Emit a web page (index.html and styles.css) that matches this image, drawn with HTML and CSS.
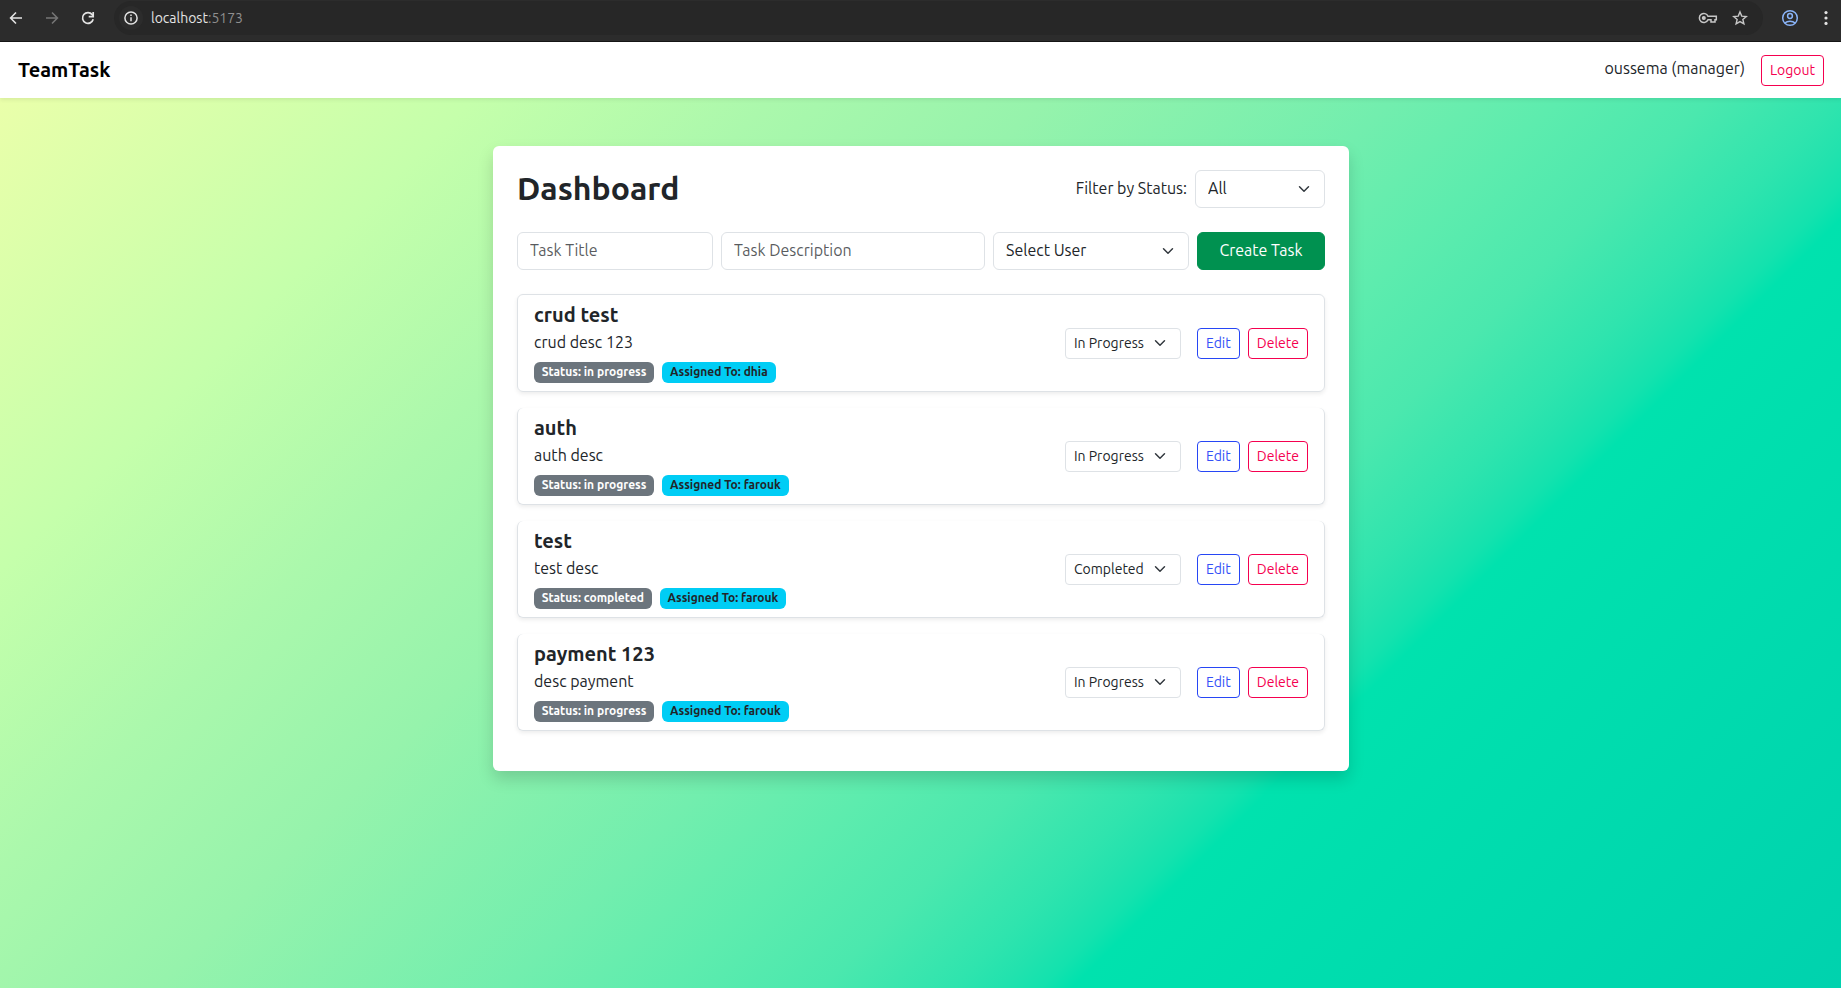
FILE: index.html
```html
<!DOCTYPE html>
<html lang="en">
<head>
<meta charset="utf-8">
<title>TeamTask</title>
<link rel="stylesheet" href="styles.css">
</head>
<body>
<header class="browser">
  <svg class="ic-back" width="16" height="16" viewBox="0 0 16 16" fill="none" stroke="#e3e3e3" stroke-width="1.6"><path d="M14 8H3M8 2.5 2.6 8 8 13.5"/></svg>
  <svg class="ic-forward" width="16" height="16" viewBox="0 0 16 16" fill="none" stroke="#757575" stroke-width="1.6"><path d="M2 8h11M8 2.5 13.4 8 8 13.5"/></svg>
  <svg class="ic-reload" width="16" height="16" viewBox="0 0 16 16" fill="none" stroke="#e3e3e3" stroke-width="1.7"><path d="M13.2 9.3A5.4 5.4 0 1 1 12.2 4.6L13.3 6"/><path d="M13.2 2v4.7H8.7"/></svg>
  <div class="omnibox">
    <span class="site-info"><svg width="14" height="14" viewBox="0 0 14 14" fill="none" stroke="#e3e3e3" stroke-width="1.5"><circle cx="7" cy="7" r="6.1"/><path d="M7 6.2v4M7 3.6v1.5"/></svg></span>
    <span class="url">localhost<span class="port">:5173</span></span>
    <svg class="ic-key" width="20" height="12" viewBox="0 0 20 12" fill="none" stroke="#c7c7c7" stroke-width="1.5"><path d="M10 4.2A4.5 4.5 0 1 0 10 7.8H13V10h4V7.8h1.3V4.2z"/><circle cx="5.8" cy="6" r="1.3" fill="#c7c7c7"/></svg>
    <svg class="ic-star" width="16" height="16" viewBox="0 0 16 16" fill="none" stroke="#c7c7c7" stroke-width="1.4"><path d="m8 1.9 1.75 4.2 4.55.4-3.45 3 1.05 4.4L8 11.55 4.1 13.9l1.05-4.4-3.45-3 4.55-.4z"/></svg>
  </div>
  <svg class="ic-profile" width="18" height="18" viewBox="0 0 18 18" fill="none" stroke="#8ab4f8" stroke-width="1.5"><circle cx="9" cy="9" r="7.3"/><circle cx="9" cy="7" r="2.4"/><path d="M3.8 14C6.5 11.6 11.5 11.6 14.2 14"/></svg>
  <svg class="ic-menu" width="4" height="16" viewBox="0 0 4 16" fill="#e3e3e3"><circle cx="2" cy="2.6" r="1.6"/><circle cx="2" cy="8" r="1.6"/><circle cx="2" cy="13.4" r="1.6"/></svg>
</header>
<div class="page">
  <nav class="navbar">
    <span class="brand">TeamTask</span>
    <div class="account"><span class="user">oussema (manager)</span><button class="btn btn-sm btn-danger">Logout</button></div>
  </nav>
  <main class="card">
    <div class="card-head">
      <h2>Dashboard</h2>
      <div class="filter"><label for="filter">Filter by Status:</label>
        <select id="filter" class="select"><option>All</option></select></div>
    </div>
    <form class="create">
      <input class="input" placeholder="Task Title">
      <input class="input" placeholder="Task Description">
      <select class="select"><option>Select User</option></select>
      <button type="button" class="btn btn-success">Create Task</button>
    </form>
    <ul class="tasks">
      <li class="task">
        <div><h5>crud test</h5><p>crud desc 123</p><div class="badges"><span class="badge">Status: in progress</span><span class="badge badge-info">Assigned To: dhia</span></div></div>
        <div class="actions"><select class="select select-sm"><option>In Progress</option></select><button class="btn btn-sm btn-primary">Edit</button><button class="btn btn-sm btn-danger">Delete</button></div>
      </li>
      <li class="task">
        <div><h5>auth</h5><p>auth desc</p><div class="badges"><span class="badge">Status: in progress</span><span class="badge badge-info">Assigned To: farouk</span></div></div>
        <div class="actions"><select class="select select-sm"><option>In Progress</option></select><button class="btn btn-sm btn-primary">Edit</button><button class="btn btn-sm btn-danger">Delete</button></div>
      </li>
      <li class="task">
        <div><h5>test</h5><p>test desc</p><div class="badges"><span class="badge">Status: completed</span><span class="badge badge-info">Assigned To: farouk</span></div></div>
        <div class="actions"><select class="select select-sm"><option>Completed</option></select><button class="btn btn-sm btn-primary">Edit</button><button class="btn btn-sm btn-danger">Delete</button></div>
      </li>
      <li class="task">
        <div><h5>payment 123</h5><p>desc payment</p><div class="badges"><span class="badge">Status: in progress</span><span class="badge badge-info">Assigned To: farouk</span></div></div>
        <div class="actions"><select class="select select-sm"><option>In Progress</option></select><button class="btn btn-sm btn-primary">Edit</button><button class="btn btn-sm btn-danger">Delete</button></div>
      </li>
    </ul>
  </main>
</div>
</body>
</html>
```
FILE: styles.css
```css
*, *::before, *::after { box-sizing: border-box; }
body {
  margin: 0;
  height: 988px;
  overflow: hidden;
  display: flex;
  flex-direction: column;
  font: 400 16px/1.5 Ubuntu, "Noto Sans", sans-serif;
  color: #212529;
}
h2, h5, p, ul { margin: 0; padding: 0; }
button, input, select { font: inherit; color: inherit; }

/* Browser toolbar */
.browser {
  flex: none;
  height: 42px;
  display: flex;
  align-items: center;
  padding: 0 13px 6px 8px;
  background: #2c2c2c;
  border-bottom: 1px solid #161616;
}
.browser svg { flex: none; }
.ic-forward { margin-left: 20px; }
.ic-reload { margin-left: 20px; }
.omnibox {
  flex: 1;
  height: 34px;
  margin: 0 18px 0 18px;
  padding: 0 15px 0 5px;
  display: flex;
  align-items: center;
  border-radius: 17px;
  background: #272727;
}
.site-info {
  width: 24px;
  height: 24px;
  display: flex;
  align-items: center;
  justify-content: center;
  border-radius: 50%;
  background: #2c2c2c;
}
.url { flex: 1; margin-left: 8px; padding-top: 2px; font-size: 14px; color: #e3e3e3; }
.port { color: #8f8f8f; }
.ic-star { margin-left: 14px; }
.ic-menu { margin-left: 25px; }

/* Application */
.page {
  flex: 1;
  background: linear-gradient(135deg, #eeffaa 0%, #c5ffab 19%, #abf8ac 29.7%, #96f3ac 39.5%, #72eeae 52%, #5decae 58%, #4be8ae 63.4%, #2fe4ae 68.1%, #22e2ae 69.8%, #13e2ae 71.3%, #00e2ae 72.4%, #00d2ae 100%);
}
.navbar {
  position: relative;
  height: 56px;
  display: flex;
  align-items: center;
  justify-content: space-between;
  padding: 0 17px 0 18px;
  background: #fff;
  box-shadow: 0 2px 4px rgba(0, 0, 0, .075);
}
.brand { font-size: 20px; font-weight: 600; color: #000; }
.account { display: flex; align-items: center; }
.user { margin-right: 16px; padding-bottom: 5px; }
.card {
  width: 856px;
  height: 625px;
  margin: 48px 0 0 493px;
  padding: 24px;
  background: #fff;
  border-radius: 6px;
  box-shadow: 0 8px 16px rgba(0, 0, 0, .15);
}
.card-head { display: flex; align-items: center; justify-content: space-between; height: 38px; }
h2 { font-size: 32px; line-height: 36px; padding-bottom: 2px; font-weight: 600; }
.filter { display: flex; align-items: center; gap: 8px; }
.filter label { padding-bottom: 2px; }
.filter .select { width: 130px; }
.create { display: grid; grid-template-columns: 196px 264px 196px 128px; gap: 8px; margin: 24px 0; }
.input, .select {
  width: 100%;
  height: 38px;
  padding: 5px 12px 7px;
  border: 1px solid #dee2e6;
  border-radius: 6px;
  background-color: #fff;
}
.input::placeholder { color: rgba(33, 37, 41, .75); opacity: 1; }
.select {
  appearance: none;
  padding-right: 36px;
  background-image: url("data:image/svg+xml,%3csvg xmlns='http://www.w3.org/2000/svg' viewBox='0 0 16 16'%3e%3cpath fill='none' stroke='%23343a40' stroke-linecap='round' stroke-linejoin='round' stroke-width='2' d='m2 5 6 6 6-6'/%3e%3c/svg%3e");
  background-repeat: no-repeat;
  background-position: right 12px center;
  background-size: 16px 12px;
}
.select-sm { width: 116px; height: 31px; padding: 4px 28px 4px 8px; font-size: 14px; border-radius: 4px; }
.btn { height: 38px; padding: 5px 12px 7px; border: 1px solid; border-radius: 6px; background: none; }
.btn-sm { height: 31px; padding: 4px 8px; font-size: 14px; line-height: 21px; border-radius: 4px; }
.btn-success { background: #009150; border-color: #009150; color: #fff; }
.btn-primary { border-color: #2746f5; color: #3450f7; }
.btn-danger { border-color: #f5004f; color: #f5004f; }

.tasks { list-style: none; display: flex; flex-direction: column; gap: 16px; }
.task {
  display: flex;
  align-items: center;
  justify-content: space-between;
  height: 97px;
  padding: 8px 16px;
  border: 1px solid #dee2e6;
  border-top-width: 0;
  border-radius: 6px;
  box-shadow: 0 2px 4px rgba(0, 0, 0, .075);
}
.task:first-child { height: 98px; border-top-width: 1px; }
h5 { font-size: 20px; line-height: 24px; font-weight: 600; margin-bottom: 3px; }
.task p { margin-bottom: 8px; line-height: 24px; }
.badges { display: flex; gap: 8px; }
.badge {
  height: 21px;
  padding: 4px 7.8px;
  border-radius: 6px;
  font-size: 12px;
  line-height: 12px;
  font-weight: 700;
  color: #fff;
  background: #6c757d;
}
.badge-info { color: #212529; background: #00cdf5; }
.actions { display: flex; align-items: center; }
.select-sm { margin-right: 16px; }
.actions .btn + .btn { margin-left: 8px; }
```
